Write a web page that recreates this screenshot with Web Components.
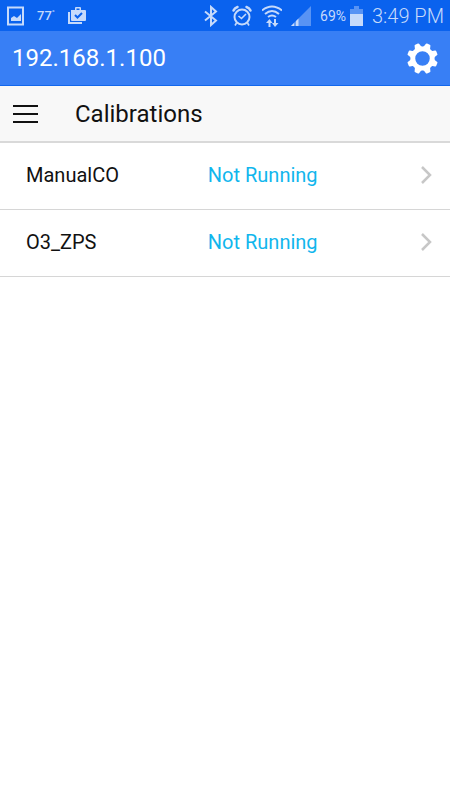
<!DOCTYPE html>
<html lang="en">
<head>
<meta charset="utf-8">
<meta name="viewport" content="width=device-width, initial-scale=1">
<title>Calibrations</title>
<style>
  body {
    margin: 0;
    min-height: 100vh;
    background: #fff;
    color: #111;
    font-family: Roboto, "Liberation Sans", sans-serif;
  }
</style>
</head>
<body>
<calibration-app>
  <status-bar slot="status" time="3:49 PM" battery="69%" temperature="77"></status-bar>
  <device-header slot="header">192.168.1.100</device-header>
  <page-toolbar slot="toolbar">Calibrations</page-toolbar>
  <calibration-row status="Not Running">ManualCO</calibration-row>
  <calibration-row status="Not Running">O3_ZPS</calibration-row>
</calibration-app>

<script>
const makeTemplate = (html) => {
  const template = document.createElement("template");
  template.innerHTML = html;
  return template;
};

class BaseElement extends HTMLElement {
  constructor() {
    super();
    this.attachShadow({ mode: "open" });
    this.shadowRoot.appendChild(this.constructor.template.content.cloneNode(true));
  }

  setText(selector, value) {
    this.shadowRoot.querySelector(selector).textContent = value ?? "";
  }
}

class StatusBar extends BaseElement {
  static template = makeTemplate(`
    <style>
      :host {
        display: flex;
        align-items: center;
        justify-content: space-between;
        height: 31px;
        padding: 0 6px;
        background: #0a62ee;
        color: #c6dafb;
      }

      .group {
        display: flex;
        align-items: center;
      }

      svg {
        display: block;
        fill: none;
        stroke: currentColor;
      }

      .left {
        gap: 13px;
      }

      .right {
        gap: 9px;
      }

      .temp {
        font-size: 13px;
        font-weight: 500;
      }

      .temp sup {
        font-size: 8px;
        line-height: 1;
      }

      .power {
        display: flex;
        align-items: center;
        gap: 4px;
      }

      .battery {
        font-size: 14px;
      }

      .time {
        font-size: 20px;
        font-weight: 300;
      }
    </style>
    <div class="group left">
      <svg width="18" height="20" viewBox="0 0 18 20">
        <rect x="2" y="1.500" width="15" height="17" stroke-width="2"/>
        <path d="M5 15v-3l3-2 3 2 4-4v7z" fill="currentColor" stroke="none"/>
      </svg>
      <span class="temp"><span class="degrees"></span><sup>°</sup></span>
      <svg width="19" height="19" viewBox="0 0 19 19">
        <path d="M1 6v11h13" stroke-width="2"/>
        <path d="M3 4h4V2q0-1 1-1h4q1 0 1 1v2h4q1 0 1 1v9q0 1-1 1H4q-1 0-1-1zM8.500 2.500v1.500h3V2.500z" fill="currentColor" fill-rule="evenodd" stroke="none"/>
        <path d="M7 9l2.500 2.500L14 7" stroke="#0a62ee" stroke-width="2"/>
      </svg>
    </div>
    <div class="group right">
      <svg width="18" height="22" viewBox="0 0 18 22">
        <path d="M1 6.500l11 9-5 4.500V2l5 4.500L1 15.500" stroke-width="2"/>
      </svg>
      <svg width="22" height="22" viewBox="0 0 22 22">
        <circle cx="11" cy="12" r="7.500" stroke-width="2"/>
        <path d="M2.500 5.500q1-2.500 4-3.500M19.500 5.500q-1-2.500-4-3.500" stroke-width="2.500" stroke-linecap="round"/>
        <path d="M7.500 11l3 2.500 4.500-4.500M5.500 18L4 20.500M16.500 18l1.500 2.500" stroke-width="1.600"/>
      </svg>
      <svg width="20" height="24" viewBox="0 0 20 24">
        <path d="M0 6.500q10-8 20 0M3 10q7-6 14 0M6 13q4-3 8 0" stroke-width="2"/>
        <path d="M7.500 23v-6M13 15v6" stroke-width="2"/>
        <path d="M4 19L7.500 15l3 4zM10 19l3 4 3.500-4z" fill="currentColor" stroke="none"/>
      </svg>
      <svg width="20" height="22" viewBox="0 0 20 22">
        <path d="M0 21L20 1v20z" fill="#5893f4" stroke="none"/>
        <path d="M0 21l7.500-7.500V21z" fill="currentColor" stroke="none"/>
        <path d="M4 15v6" stroke="#0a62ee"/>
      </svg>
      <div class="power">
        <span class="battery"></span>
        <svg width="13" height="20" viewBox="0 0 13 20">
          <path d="M4 0h5v3h4v17H0V3h4z" fill="#5893f4" stroke="none"/>
          <path d="M0 8h13v12H0z" fill="currentColor" stroke="none"/>
        </svg>
      </div>
      <span class="time"></span>
    </div>
  `);

  connectedCallback() {
    this.setText(".degrees", this.getAttribute("temperature"));
    this.setText(".battery", this.getAttribute("battery"));
    this.setText(".time", this.getAttribute("time"));
  }
}

class DeviceHeader extends BaseElement {
  static template = makeTemplate(`
    <style>
      :host {
        display: flex;
        align-items: center;
        justify-content: space-between;
        box-sizing: border-box;
        height: 55px;
        padding: 0 12px;
        border-bottom: 1px solid #1267ed;
        background: #387ff5;
        color: #fff;
        font-size: 24px;
      }

      button {
        padding: 0;
        border: 0;
        background: none;
        color: inherit;
        cursor: pointer;
      }

      svg {
        display: block;
      }
    </style>
    <slot></slot>
    <button type="button" aria-label="Settings">
      <svg width="31" height="31" viewBox="-16 -16 32 32" fill="currentColor">
        <circle r="10" fill="none" stroke="currentColor" stroke-width="5"/>
        <g class="teeth"></g>
      </svg>
    </button>
  `);

  constructor() {
    super();
    const teeth = this.shadowRoot.querySelector(".teeth");
    for (let i = 0; i < 8; i++) {
      const tooth = document.createElementNS("http://www.w3.org/2000/svg", "path");
      tooth.setAttribute("d", "M-5-10Q-3-12-2.600-15Q-2.500-16-1.500-16H1.500Q2.500-16 2.600-15Q3-12 5-10z");
      tooth.setAttribute("transform", `rotate(${i * 45 + 22.5})`);
      teeth.appendChild(tooth);
    }
  }
}

class PageToolbar extends BaseElement {
  static template = makeTemplate(`
    <style>
      :host {
        display: flex;
        align-items: center;
        gap: 37px;
        box-sizing: border-box;
        height: 57px;
        padding: 0 12px;
        border-bottom: 2px solid #d9d9d9;
        background: #f8f8f8;
      }

      button {
        padding: 0;
        border: 0;
        background: none;
        color: inherit;
        cursor: pointer;
      }

      svg {
        display: block;
      }

      h1 {
        margin: 0;
        font-size: 24px;
        font-weight: 400;
      }
    </style>
    <button type="button" aria-label="Menu">
      <svg width="26" height="18" viewBox="0 0 26 18" fill="currentColor">
        <path d="M1 0h25v2H1zM1 8h25v2H1zM1 16h25v2H1z"/>
      </svg>
    </button>
    <h1><slot></slot></h1>
  `);
}

class CalibrationRow extends BaseElement {
  static template = makeTemplate(`
    <style>
      :host {
        display: block;
        border-bottom: 1px solid #d6d6d6;
      }

      a {
        display: grid;
        grid-template-columns: 6fr 7fr 12px;
        align-items: center;
        box-sizing: border-box;
        height: 66px;
        padding: 0 18px 2px 26px;
        color: inherit;
        font-size: 20px;
        text-decoration: none;
      }

      .status {
        color: #11b6ed;
      }

      svg {
        display: block;
      }
    </style>
    <a href="#">
      <span><slot></slot></span>
      <span class="status"></span>
      <svg width="12" height="18" viewBox="0 0 12 18" fill="none" stroke="#c7c7c7" stroke-width="2.500">
        <path d="M2 1l8 8-8 8"/>
      </svg>
    </a>
  `);

  connectedCallback() {
    this.setText(".status", this.getAttribute("status"));
  }
}

class CalibrationApp extends BaseElement {
  static template = makeTemplate(`
    <style>
      :host {
        display: block;
      }
    </style>
    <slot name="status"></slot>
    <slot name="header"></slot>
    <slot name="toolbar"></slot>
    <main><slot></slot></main>
  `);
}

customElements.define("status-bar", StatusBar);
customElements.define("device-header", DeviceHeader);
customElements.define("page-toolbar", PageToolbar);
customElements.define("calibration-row", CalibrationRow);
customElements.define("calibration-app", CalibrationApp);
</script>
</body>
</html>
